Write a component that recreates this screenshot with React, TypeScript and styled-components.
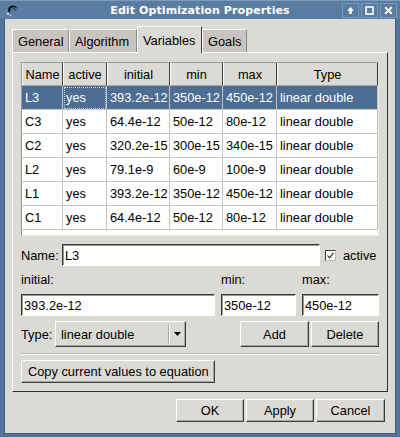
import React from 'react';
import styled, { createGlobalStyle } from 'styled-components';

const FS = '12.8px';

const Global = createGlobalStyle`
  html, body { margin: 0; padding: 0; background: #ffffff; }
  body { font-family: "Liberation Sans", Arial, sans-serif; font-size: ${FS}; color: #000; }
  * { box-sizing: border-box; }
`;

const Window = styled.div`
  width: 400px;
  height: 437px;
  background: #52739a;
  display: flex;
  flex-direction: column;
`;

const TitleBar = styled.div`
  height: 19px;
  flex: 0 0 19px;
  display: flex;
  align-items: center;
  padding: 0 3px 0 5px;
  background: #5a7ca1;
  border-top: 1px solid #7e9cbc;
`;

const TitleIcon = styled.div`
  width: 13px;
  height: 13px;
  display: flex;
`;

const TitleText = styled.div`
  flex: 1;
  text-align: center;
  color: #ffffff;
  font-family: "DejaVu Sans", sans-serif;
  font-weight: bold;
  font-size: 11px;
  padding-left: 40px;
  letter-spacing: 0.1px;
`;

const TitleButtons = styled.div`
  display: flex;
  gap: 1px;
`;

const TitleButton = styled.div`
  width: 17px;
  height: 15px;
  border: 1px solid #7b98b8;
  background: #5a7ca1;
  display: flex;
  align-items: center;
  justify-content: center;
  & + & { margin-left: 1px; }
`;

const Body = styled.div`
  flex: 1;
  margin: 0 4px 3px 4px;
  background: #dcdad5;
  border: 1px solid #3f5a7a;
  border-top: none;
  padding: 7px 7px 0 7px;
  display: flex;
  flex-direction: column;
`;

const TabRow = styled.div`
  display: flex;
  align-items: flex-end;
  height: 26px;
  position: relative;
  z-index: 1;
`;

const Tab = styled.div<{ $w: number; $active?: boolean }>`
  width: ${p => p.$w}px;
  height: ${p => (p.$active ? 27 : 23)}px;
  margin-bottom: ${p => (p.$active ? -1 : 0)}px;
  background: ${p => (p.$active ? '#dcdad5' : '#c8c5bf')};
  border-top: 1px solid #ffffff;
  border-left: 1px solid #ffffff;
  border-right: 1px solid ${p => (p.$active ? '#3a3a3a' : '#8a8883')};
  display: flex;
  align-items: center;
  padding-left: 5px;
  padding-top: ${p => (p.$active ? 0 : 1)}px;
  font-size: ${FS};
`;

const Panel = styled.div`
  width: 376px;
  height: 340px;
  border-top: 1px solid #ffffff;
  border-left: 1px solid #ffffff;
  border-right: 1px solid #2e2e2e;
  border-bottom: 1px solid #2e2e2e;
  padding: 9px 8px 0 8px;
  display: flex;
  flex-direction: column;
`;

const TableFrame = styled.div`
  width: 358px;
  height: 174px;
  background: #ffffff;
  border-top: 1px solid #9a9893;
  border-left: 1px solid #9a9893;
  border-right: 1px solid #e8e7e4;
  border-bottom: 1px solid #e8e7e4;
  overflow: hidden;
`;

const Grid = styled.div`
  display: grid;
  grid-template-columns: 41px 44px 63px 53px 54px 101px;
  grid-auto-rows: 24px;
  grid-template-rows: 23px;
`;

const HeadCell = styled.div`
  background: #dcdad5;
  border-left: 1px solid #ffffff;
  border-right: 1px solid #3c3c3c;
  border-bottom: 1px solid #a9a7a2;
  display: flex;
  align-items: center;
  justify-content: center;
  font-size: ${FS};
`;

const Cell = styled.div<{ $sel?: boolean; $focus?: boolean }>`
  background: ${p => (p.$sel ? '#4d6d92' : '#ffffff')};
  color: ${p => (p.$sel ? '#ffffff' : '#000000')};
  border-right: 1px solid #c6c4c0;
  border-bottom: 1px solid #c6c4c0;
  display: flex;
  align-items: center;
  padding-left: 3px;
  white-space: nowrap;
  overflow: hidden;
  font-size: ${FS};
  outline: ${p => (p.$focus ? '1px dotted #c8d2de' : 'none')};
  outline-offset: -2px;
`;

const NameRow = styled.div`
  display: flex;
  align-items: center;
  height: 22px;
  margin-top: 8px;
`;

const Label = styled.span`
  font-size: ${FS};
  white-space: nowrap;
`;

const NameLabel = styled(Label)`
  width: 41px;
`;

const Input = styled.div<{ $w: number }>`
  width: ${p => p.$w}px;
  height: 22px;
  background: #ffffff;
  border-top: 1px solid #3a3a3a;
  border-left: 1px solid #3a3a3a;
  border-right: 1px solid #ffffff;
  border-bottom: 1px solid #ffffff;
  box-shadow: inset 1px 1px 0 #9a9893;
  display: flex;
  align-items: center;
  padding-left: 2px;
  font-size: ${FS};
`;

const CheckWrap = styled.div`
  display: flex;
  align-items: center;
  margin-left: 5px;
  gap: 7px;
`;

const CheckBox = styled.div`
  width: 11px;
  height: 11px;
  background: #ffffff;
  border-top: 1px solid #3a3a3a;
  border-left: 1px solid #3a3a3a;
  border-right: 1px solid #c0beb9;
  border-bottom: 1px solid #c0beb9;
  display: flex;
  align-items: center;
  justify-content: center;
`;

const ValueGrid = styled.div`
  display: grid;
  grid-template-columns: 194px 75px 77px;
  column-gap: 6px;
  grid-template-rows: 28px 22px;
`;

const ValueLabel = styled(Label)`
  display: flex;
  align-items: center;
  padding-bottom: 1px;
`;

const TypeRow = styled.div`
  display: flex;
  align-items: center;
  height: 26px;
  margin-top: 5px;
`;

const TypeLabel = styled(Label)`
  width: 34px;
`;

const Raised = styled.div`
  background: #dcdad5;
  border-top: 1px solid #ffffff;
  border-left: 1px solid #ffffff;
  border-right: 1px solid #3a3a3a;
  border-bottom: 1px solid #3a3a3a;
  box-shadow: inset -1px -1px 0 #a9a7a2;
  display: flex;
  align-items: center;
  font-size: ${FS};
`;

const Combo = styled(Raised)`
  width: 131px;
  height: 26px;
  padding-left: 5px;
`;

const ComboText = styled.span`
  flex: 1;
`;

const ComboSep = styled.div`
  width: 2px;
  height: 18px;
  border-left: 1px solid #a9a7a2;
  border-right: 1px solid #ffffff;
`;

const ComboArrow = styled.div`
  width: 15px;
  display: flex;
  justify-content: center;
`;

const Button = styled(Raised)<{ $w: number; $h?: number }>`
  width: ${p => p.$w}px;
  height: ${p => p.$h ?? 23}px;
  justify-content: center;
`;

const Spacer = styled.div`
  flex: 1;
`;

const RowButtons = styled.div`
  display: flex;
  gap: 2px;
`;

const Separator = styled.div`
  height: 2px;
  margin-top: 6px;
  border-top: 1px solid #bdbbb6;
  border-bottom: 1px solid #f4f3f1;
`;

const CopyButton = styled(Button)`
  margin-top: 5px;
  justify-content: flex-start;
  padding-left: 6px;
`;

const BottomRow = styled.div`
  display: flex;
  justify-content: flex-end;
  gap: 2px;
  margin-top: 7px;
  padding-right: 3px;
`;

const cols = ['Name', 'active', 'initial', 'min', 'max', 'Type'];
const rows = [
  ['L3', 'yes', '393.2e-12', '350e-12', '450e-12', 'linear double'],
  ['C3', 'yes', '64.4e-12', '50e-12', '80e-12', 'linear double'],
  ['C2', 'yes', '320.2e-15', '300e-15', '340e-15', 'linear double'],
  ['L2', 'yes', '79.1e-9', '60e-9', '100e-9', 'linear double'],
  ['L1', 'yes', '393.2e-12', '350e-12', '450e-12', 'linear double'],
  ['C1', 'yes', '64.4e-12', '50e-12', '80e-12', 'linear double'],
];

export default function App() {
  return (
    <>
      <Global />
      <Window>
        <TitleBar>
          <TitleIcon>
            <svg width="13" height="13" viewBox="0 0 13 13">
              <path d="M3 6 C3 2.5 6 1 9 1.5 C11 2 12 3.5 12 5 C11 3.5 9 3 7.5 3.5 C6 4 5 5.5 5.5 7.5 L4 8 C3.4 7.5 3 7 3 6 Z" fill="#101418" />
              <path d="M8 4 C9.5 4 10.5 5 10.5 6.5 L9 6 C9 5 8.5 4.6 8 4 Z" fill="#101418" />
              <circle cx="3" cy="10" r="1" fill="#e8eef4" />
              <circle cx="5.5" cy="11.5" r="0.9" fill="#c8d4e0" />
              <circle cx="1.5" cy="8" r="0.7" fill="#a8bccf" />
            </svg>
          </TitleIcon>
          <TitleText>Edit Optimization Properties</TitleText>
          <TitleButtons>
            <TitleButton>
              <svg width="9" height="9" viewBox="0 0 9 9">
                <path d="M4.5 1 L8 4.8 H5.8 V8 H3.2 V4.8 H1 Z" fill="#ffffff" />
              </svg>
            </TitleButton>
            <TitleButton>
              <svg width="9" height="9" viewBox="0 0 9 9">
                <rect x="1" y="1" width="7" height="7" fill="none" stroke="#ffffff" strokeWidth="1.6" />
              </svg>
            </TitleButton>
            <TitleButton>
              <svg width="9" height="9" viewBox="0 0 9 9">
                <path d="M1.2 1.2 L7.8 7.8 M7.8 1.2 L1.2 7.8" stroke="#ffffff" strokeWidth="2" />
              </svg>
            </TitleButton>
          </TitleButtons>
        </TitleBar>
        <Body>
          <TabRow>
            <Tab $w={57}>General</Tab>
            <Tab $w={68}>Algorithm</Tab>
            <Tab $w={65} $active>Variables</Tab>
            <Tab $w={45}>Goals</Tab>
          </TabRow>
          <Panel>
            <TableFrame>
              <Grid>
                {cols.map(c => (
                  <HeadCell key={c}>{c}</HeadCell>
                ))}
                {rows.map((r, i) =>
                  r.map((v, j) => (
                    <Cell key={`${i}-${j}`} $sel={i === 0} $focus={i === 0 && j === 1}>
                      {v}
                    </Cell>
                  ))
                )}
              </Grid>
            </TableFrame>
            <NameRow>
              <NameLabel>Name:</NameLabel>
              <Input $w={258}>L3</Input>
              <CheckWrap>
                <CheckBox>
                  <svg width="9" height="9" viewBox="0 0 9 9">
                    <path d="M1.5 4.5 L3.5 6.8 L7.5 1.8" fill="none" stroke="#222" strokeWidth="1.1" />
                  </svg>
                </CheckBox>
                <Label>active</Label>
              </CheckWrap>
            </NameRow>
            <ValueGrid>
              <ValueLabel>initial:</ValueLabel>
              <ValueLabel>min:</ValueLabel>
              <ValueLabel>max:</ValueLabel>
              <Input $w={194}>393.2e-12</Input>
              <Input $w={75}>350e-12</Input>
              <Input $w={77}>450e-12</Input>
            </ValueGrid>
            <TypeRow>
              <TypeLabel>Type:</TypeLabel>
              <Combo>
                <ComboText>linear double</ComboText>
                <ComboSep />
                <ComboArrow>
                  <svg width="7" height="4" viewBox="0 0 7 4">
                    <path d="M0 0 H7 L3.5 4 Z" fill="#000" />
                  </svg>
                </ComboArrow>
              </Combo>
              <Spacer />
              <RowButtons>
                <Button $w={69} $h={26}>Add</Button>
                <Button $w={68} $h={26}>Delete</Button>
              </RowButtons>
            </TypeRow>
            <Separator />
            <CopyButton $w={194}>Copy current values to equation</CopyButton>
          </Panel>
          <BottomRow>
            <Button $w={68}>OK</Button>
            <Button $w={68}>Apply</Button>
            <Button $w={69}>Cancel</Button>
          </BottomRow>
        </Body>
      </Window>
    </>
  );
}
